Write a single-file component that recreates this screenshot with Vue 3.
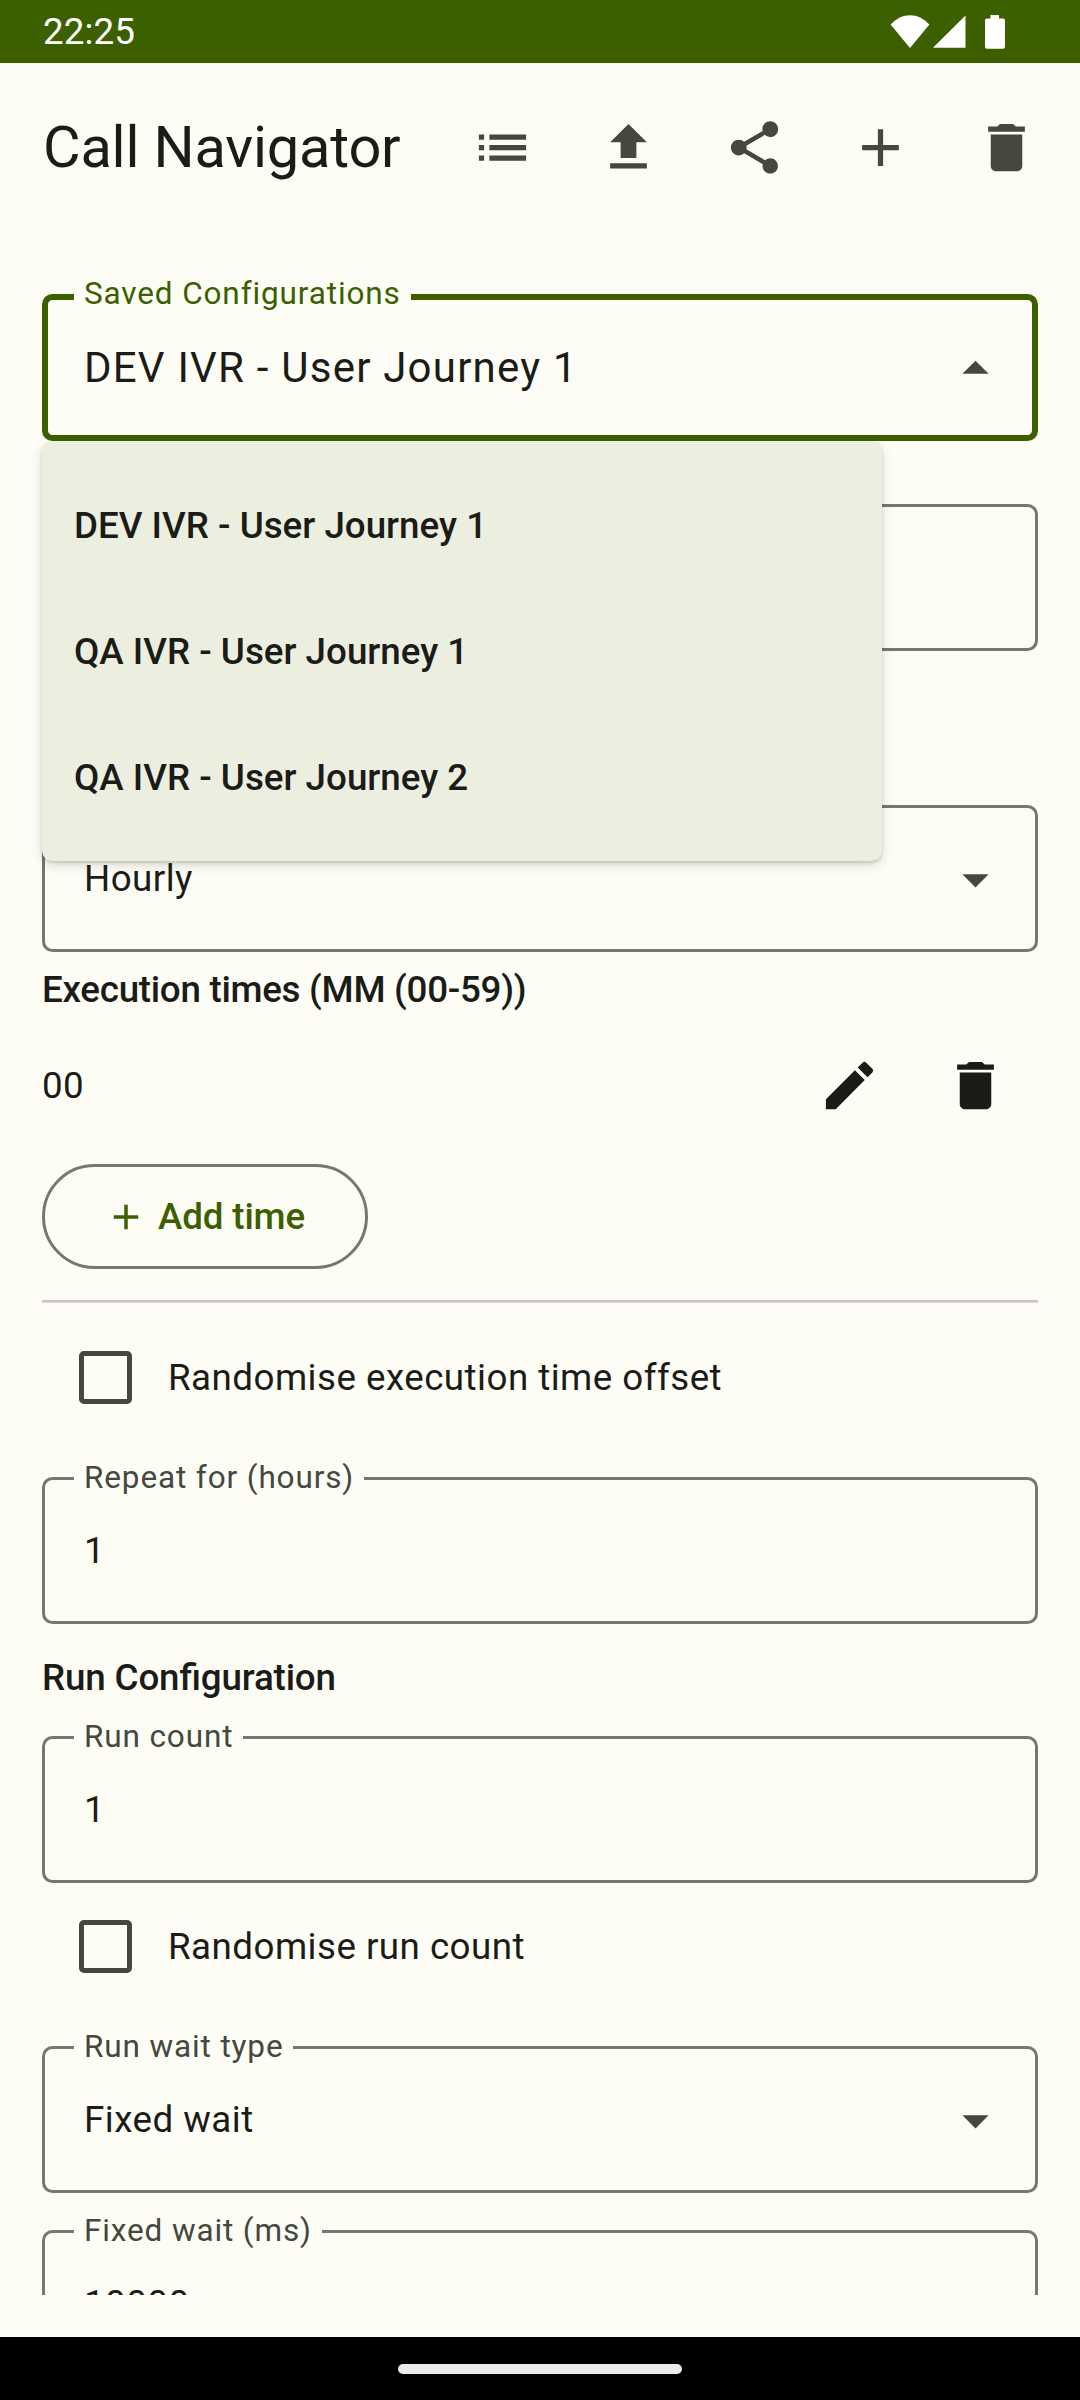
<template>
  <div class="screen">
    <div class="status-bar">
      <span class="clock">22:25</span>
      <svg class="status-icons" viewBox="0 0 116 34">
        <path d="M20 33 L0.6 9.5 C12 -3 28 -3 39.4 9.5 Z" />
        <path d="M75.5 0.5 V32.8 H43 Z" />
        <path d="M100.5 0 h8.5 v3.5 h4 a2 2 0 0 1 2 2 v26.2 a2 2 0 0 1 -2 2 h-16 a2 2 0 0 1 -2 -2 v-26.2 a2 2 0 0 1 2 -2 h3.5 z" />
      </svg>
    </div>

    <header class="app-bar">
      <h1 class="title">Call Navigator</h1>
      <button v-for="name in actions" :key="name" class="icon-button" :aria-label="name">
        <svg viewBox="0 0 24 24"><path :d="icons[name]" /></svg>
      </button>
    </header>

    <main class="content">
      <div class="field focused">
        <span class="label">Saved Configurations</span>
        <span class="value">{{ selected }}</span>
        <svg class="arrow" viewBox="0 0 24 24"><path :d="icons.up" /></svg>
        <ul v-if="menuOpen" class="menu">
          <li v-for="item in configurations" :key="item" @click="select(item)">{{ item }}</li>
        </ul>
      </div>

      <div class="field name-field"></div>

      <div class="field frequency-field">
        <span class="value">Hourly</span>
        <svg class="arrow" viewBox="0 0 24 24"><path :d="icons.down" /></svg>
      </div>

      <h2 class="times-heading">Execution times (MM (00-59))</h2>
      <div class="time-row" v-for="time in times" :key="time">
        <span class="time">{{ time }}</span>
        <button class="icon-button" aria-label="edit"><svg viewBox="0 0 24 24"><path :d="icons.edit" /></svg></button>
        <button class="icon-button" aria-label="delete"><svg viewBox="0 0 24 24"><path :d="icons.delete" /></svg></button>
      </div>
      <button class="add-button">
        <svg viewBox="0 0 24 24"><path :d="icons.add" /></svg>
        <span>Add time</span>
      </button>
      <div class="divider"></div>

      <div class="check-row">
        <span class="box"></span>
        <span>Randomise execution time offset</span>
      </div>

      <div class="field spaced">
        <span class="label">Repeat for (hours)</span>
        <span class="value">1</span>
      </div>

      <h2 class="run-heading">Run Configuration</h2>
      <div class="field">
        <span class="label">Run count</span>
        <span class="value">1</span>
      </div>

      <div class="check-row">
        <span class="box"></span>
        <span>Randomise run count</span>
      </div>

      <div class="field spaced">
        <span class="label">Run wait type</span>
        <span class="value">Fixed wait</span>
        <svg class="arrow" viewBox="0 0 24 24"><path :d="icons.down" /></svg>
      </div>

      <div class="field spaced">
        <span class="label">Fixed wait (ms)</span>
        <span class="value">10000</span>
      </div>
    </main>

    <div class="nav-bar"><span class="handle"></span></div>
  </div>
</template>

<script setup>
import { ref } from 'vue'

const icons = {
  list: 'M3 13h2v-2H3v2zm0 4h2v-2H3v2zm0-8h2V7H3v2zm4 4h14v-2H7v2zm0 4h14v-2H7v2zM7 7v2h14V7H7z',
  upload: 'M9 16h6v-6h4l-7-7-7 7h4v6zm-4 2h14v2H5v-2z',
  share: 'M18 16.08c-.76 0-1.44.3-1.96.77L8.91 12.7c.05-.23.09-.46.09-.7s-.04-.47-.09-.7l7.05-4.11c.54.5 1.25.81 2.04.81 1.66 0 3-1.34 3-3s-1.34-3-3-3-3 1.34-3 3c0 .24.04.47.09.7L8.04 9.81C7.5 9.31 6.79 9 6 9c-1.66 0-3 1.34-3 3s1.34 3 3 3c.79 0 1.5-.31 2.04-.81l7.12 4.16c-.05.21-.08.43-.08.65 0 1.61 1.31 2.92 2.92 2.92s2.92-1.31 2.92-2.92-1.31-2.92-2.92-2.92z',
  add: 'M19 13h-6v6h-2v-6H5v-2h6V5h2v6h6v2z',
  delete: 'M6 19c0 1.1.9 2 2 2h8c1.1 0 2-.9 2-2V7H6v12zM19 4h-3.5l-1-1h-5l-1 1H5v2h14V4z',
  edit: 'M3 17.25V21h3.75L17.81 9.94l-3.75-3.75L3 17.25zM20.71 7.04a1 1 0 0 0 0-1.41l-2.34-2.34a1 1 0 0 0-1.41 0l-1.83 1.83 3.75 3.75 1.83-1.83z',
  up: 'M7 14l5-5 5 5z',
  down: 'M7 10l5 5 5-5z'
}
const actions = ['list', 'upload', 'share', 'add', 'delete']

const configurations = ['DEV IVR - User Journey 1', 'QA IVR - User Journey 1', 'QA IVR - User Journey 2']
const selected = ref(configurations[0])
const menuOpen = ref(true)
const times = ref(['00'])

const select = (item) => {
  selected.value = item
  menuOpen.value = false
}
</script>

<style>
body {
  margin: 0;
  background: #fdfdf5;
}
</style>

<style scoped>
.screen {
  display: flex;
  flex-direction: column;
  width: 1080px;
  height: 2400px;
  overflow: hidden;
  background: #fdfdf5;
  color: #1b1c18;
  font-family: Roboto, sans-serif;
  font-size: 36.75px;
  letter-spacing: 0.46px;
}
button {
  padding: 0;
  border: 0;
  background: none;
  color: inherit;
  font: inherit;
}
svg {
  display: block;
  fill: currentColor;
}
.status-bar {
  display: flex;
  flex: none;
  align-items: center;
  justify-content: space-between;
  height: 63px;
  padding: 0 74px 0 43px;
  background: #3c6000;
  color: #fff;
}
.clock {
  letter-spacing: 0.1px;
}
.status-icons {
  width: 116px;
  height: 34px;
}
.app-bar {
  display: flex;
  flex: none;
  align-items: center;
  height: 168px;
  padding: 0 10.5px 0 43px;
  color: #44483f;
}
.title {
  flex: 1;
  margin: 0;
  color: #1b1c18;
  font-size: 57.75px;
  font-weight: 400;
  letter-spacing: -0.2px;
}
.icon-button {
  display: flex;
  align-items: center;
  justify-content: center;
  width: 126px;
  height: 126px;
}
.icon-button svg {
  width: 63px;
  height: 63px;
}
.content {
  flex: none;
  box-sizing: border-box;
  height: 2064px;
  padding: 63px 42px 0;
  overflow: hidden;
}
.field {
  position: relative;
  display: flex;
  align-items: center;
  justify-content: space-between;
  box-sizing: border-box;
  height: 147px;
  padding: 0 28px 0 39px;
  border: 3px solid #74796d;
  border-radius: 10.5px;
}
.focused {
  padding: 0 25px 0 36px;
  border: 6px solid #3c6000;
}
.label {
  position: absolute;
  top: -21px;
  left: 29px;
  padding: 0 10px;
  background: #fdfdf5;
  color: #44483f;
  font-size: 31.5px;
  line-height: 37px;
  letter-spacing: 0.87px;
}
.focused .label {
  top: -25px;
  left: 26px;
  color: #3c6000;
}
.focused .value {
  font-size: 42px;
  letter-spacing: 1.22px;
}
.arrow {
  width: 63px;
  height: 63px;
  margin-top: 1px;
  color: #44483f;
}
.focused .arrow {
  margin-top: 2px;
}
.menu {
  position: absolute;
  z-index: 1;
  top: 141px;
  left: -6px;
  box-sizing: border-box;
  width: 840px;
  margin: 0;
  padding: 22px 0 20px;
  border-radius: 10.5px;
  background: #eceee0;
  box-shadow: 0 2px 3px rgba(0, 0, 0, 0.12), 0 4px 12px rgba(0, 0, 0, 0.14);
  list-style: none;
}
.menu li {
  padding: 0 32px;
  font-weight: 500;
  line-height: 126px;
  letter-spacing: 0;
}
.name-field {
  margin-top: 63px;
}
.frequency-field {
  margin-top: 154px;
}
h2 {
  margin: 0;
  font-size: 36.75px;
  font-weight: 500;
}
.times-heading {
  padding: 10px 0 5px;
  line-height: 55px;
  letter-spacing: -0.28px;
}
.time-row {
  display: flex;
  align-items: center;
  height: 126px;
}
.time {
  flex: 1;
}
.add-button {
  display: flex;
  align-items: center;
  gap: 11px;
  box-sizing: border-box;
  width: 326px;
  height: 105px;
  margin-top: 16px;
  padding: 0 60px;
  border: 3px solid #74796d;
  border-radius: 52.5px;
  color: #3c6000;
  font-weight: 500;
  letter-spacing: -0.15px;
  white-space: nowrap;
}
.add-button svg {
  flex: none;
  width: 42px;
  height: 42px;
}
.divider {
  height: 3px;
  margin: 31px 0 11px;
  background: linear-gradient(#cac4d0 2px, #dcd8dd 2px);
}
.check-row {
  display: flex;
  align-items: center;
  gap: 36px;
  height: 127px;
  padding-left: 37px;
}
.box {
  box-sizing: border-box;
  width: 53px;
  height: 53px;
  border: 5px solid #44483f;
  border-radius: 5px;
}
.spaced {
  margin-top: 36px;
}
.field + .spaced {
  margin-top: 37px;
}
.run-heading {
  padding: 27px 0 32px;
  line-height: 53px;
  letter-spacing: -0.15px;
  font-feature-settings: "liga" 1;
}
.nav-bar {
  display: flex;
  flex: none;
  align-items: center;
  justify-content: center;
  height: 63px;
  margin-top: auto;
  background: #000;
}
.handle {
  width: 284px;
  height: 10px;
  border-radius: 5px;
  background: #ebebeb;
}
</style>
